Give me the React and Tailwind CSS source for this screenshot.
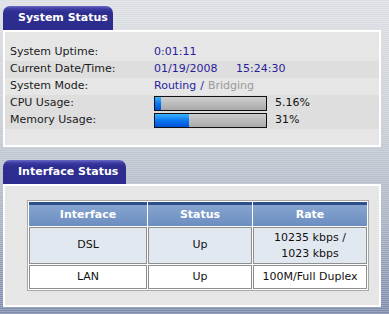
import React from 'react';

const font = { fontFamily: '"DejaVu Sans", Verdana, sans-serif' };

const Tab = ({ label, width }) => (
  <div
    className={`${width} h-[24px] rounded-t-[7px] bg-[linear-gradient(#6a6ac4_0px,#3b3ba4_3px,#2e2e92_6px,#2c2c8e_100%)] flex items-center pl-[15px] text-white font-bold text-[11px]`}
  >
    {label}
  </div>
);

const Bar = ({ fill }) => (
  <div className="w-[113px] h-[15px] border border-[#111] bg-[linear-gradient(#cfcfcf,#a9a9a9)] flex">
    <div className={`${fill} h-full bg-[linear-gradient(#39b4ff,#0a78f0_50%,#0050d8)]`} />
  </div>
);

const Row = ({ label, shade, children }) => (
  <div className={`h-[17px] flex items-center pl-[5px] ${shade ? 'bg-[#dedede]' : ''}`}>
    <div className="w-[144px] text-[#1a1a1a]">{label}</div>
    <div className="flex items-center">{children}</div>
  </div>
);

const App = () => {
  return (
    <div
      style={font}
      className="w-[389px] h-[314px] overflow-hidden text-[11px] pl-[3px] pt-[6px] bg-[image:repeating-linear-gradient(0deg,rgba(255,255,255,0.22)_0px,rgba(255,255,255,0.22)_1px,transparent_1px,transparent_2px),linear-gradient(#dcdfe3,#c9ced5_40%,#aab3c3_70%,#7d8bab)]"
    >
      <Tab label="System Status" width="w-[110px]" />
      <div className="w-[378px] h-[117px] border-2 border-white bg-[#e6e6e6] pt-[12px]">
        <Row label="System Uptime:">
          <span className="text-[#2a1c9c]">0:01:11</span>
        </Row>
        <Row label="Current Date/Time:" shade>
          <span className="text-[#2a1c9c] w-[82px]">01/19/2008</span>
          <span className="text-[#2a1c9c]">15:24:30</span>
        </Row>
        <Row label="System Mode:">
          <span className="text-[#2a1c9c]">Routing</span>
          <span className="text-[#2a1c9c] px-[4px]">/</span>
          <span className="text-[#9a9a9a]">Bridging</span>
        </Row>
        <Row label="CPU Usage:" shade>
          <Bar fill="w-[6px]" />
          <span className="ml-[8px] text-[#111]">5.16%</span>
        </Row>
        <Row label="Memory Usage:" shade>
          <Bar fill="w-[34px]" />
          <span className="ml-[8px] text-[#111]">31%</span>
        </Row>
      </div>

      <div className="h-[13px]" />

      <Tab label="Interface Status" width="w-[123px]" />
      <div className="w-[378px] h-[123px] border-2 border-white bg-[#e6e6e6] pt-[14px] pl-[22px]">
        <table className="w-[342px] border-separate border-spacing-[1px] border border-[#a8a8a8] bg-white text-center text-[#111]">
          <thead>
            <tr className="h-[24px]">
              <th className="w-[118px] border-t-[3px] border-[#2d4f8e] bg-[linear-gradient(#86a4cf,#6b8dc0)] text-white font-bold">Interface</th>
              <th className="w-[104px] border-t-[3px] border-[#2d4f8e] bg-[linear-gradient(#86a4cf,#6b8dc0)] text-white font-bold">Status</th>
              <th className="border-t-[3px] border-[#2d4f8e] bg-[linear-gradient(#86a4cf,#6b8dc0)] text-white font-bold">Rate</th>
            </tr>
          </thead>
          <tbody>
            <tr className="h-[37px] bg-[#e2e8f0]">
              <td className="border border-[#8f8f8f]">DSL</td>
              <td className="border border-[#8f8f8f]">Up</td>
              <td className="border border-[#8f8f8f] leading-[16px]">
                10235 kbps /
                <br />
                1023 kbps
              </td>
            </tr>
            <tr className="h-[24px] bg-white">
              <td className="border border-[#8f8f8f]">LAN</td>
              <td className="border border-[#8f8f8f]">Up</td>
              <td className="border border-[#8f8f8f]">100M/Full Duplex</td>
            </tr>
          </tbody>
        </table>
      </div>
    </div>
  );
};

export default App;
